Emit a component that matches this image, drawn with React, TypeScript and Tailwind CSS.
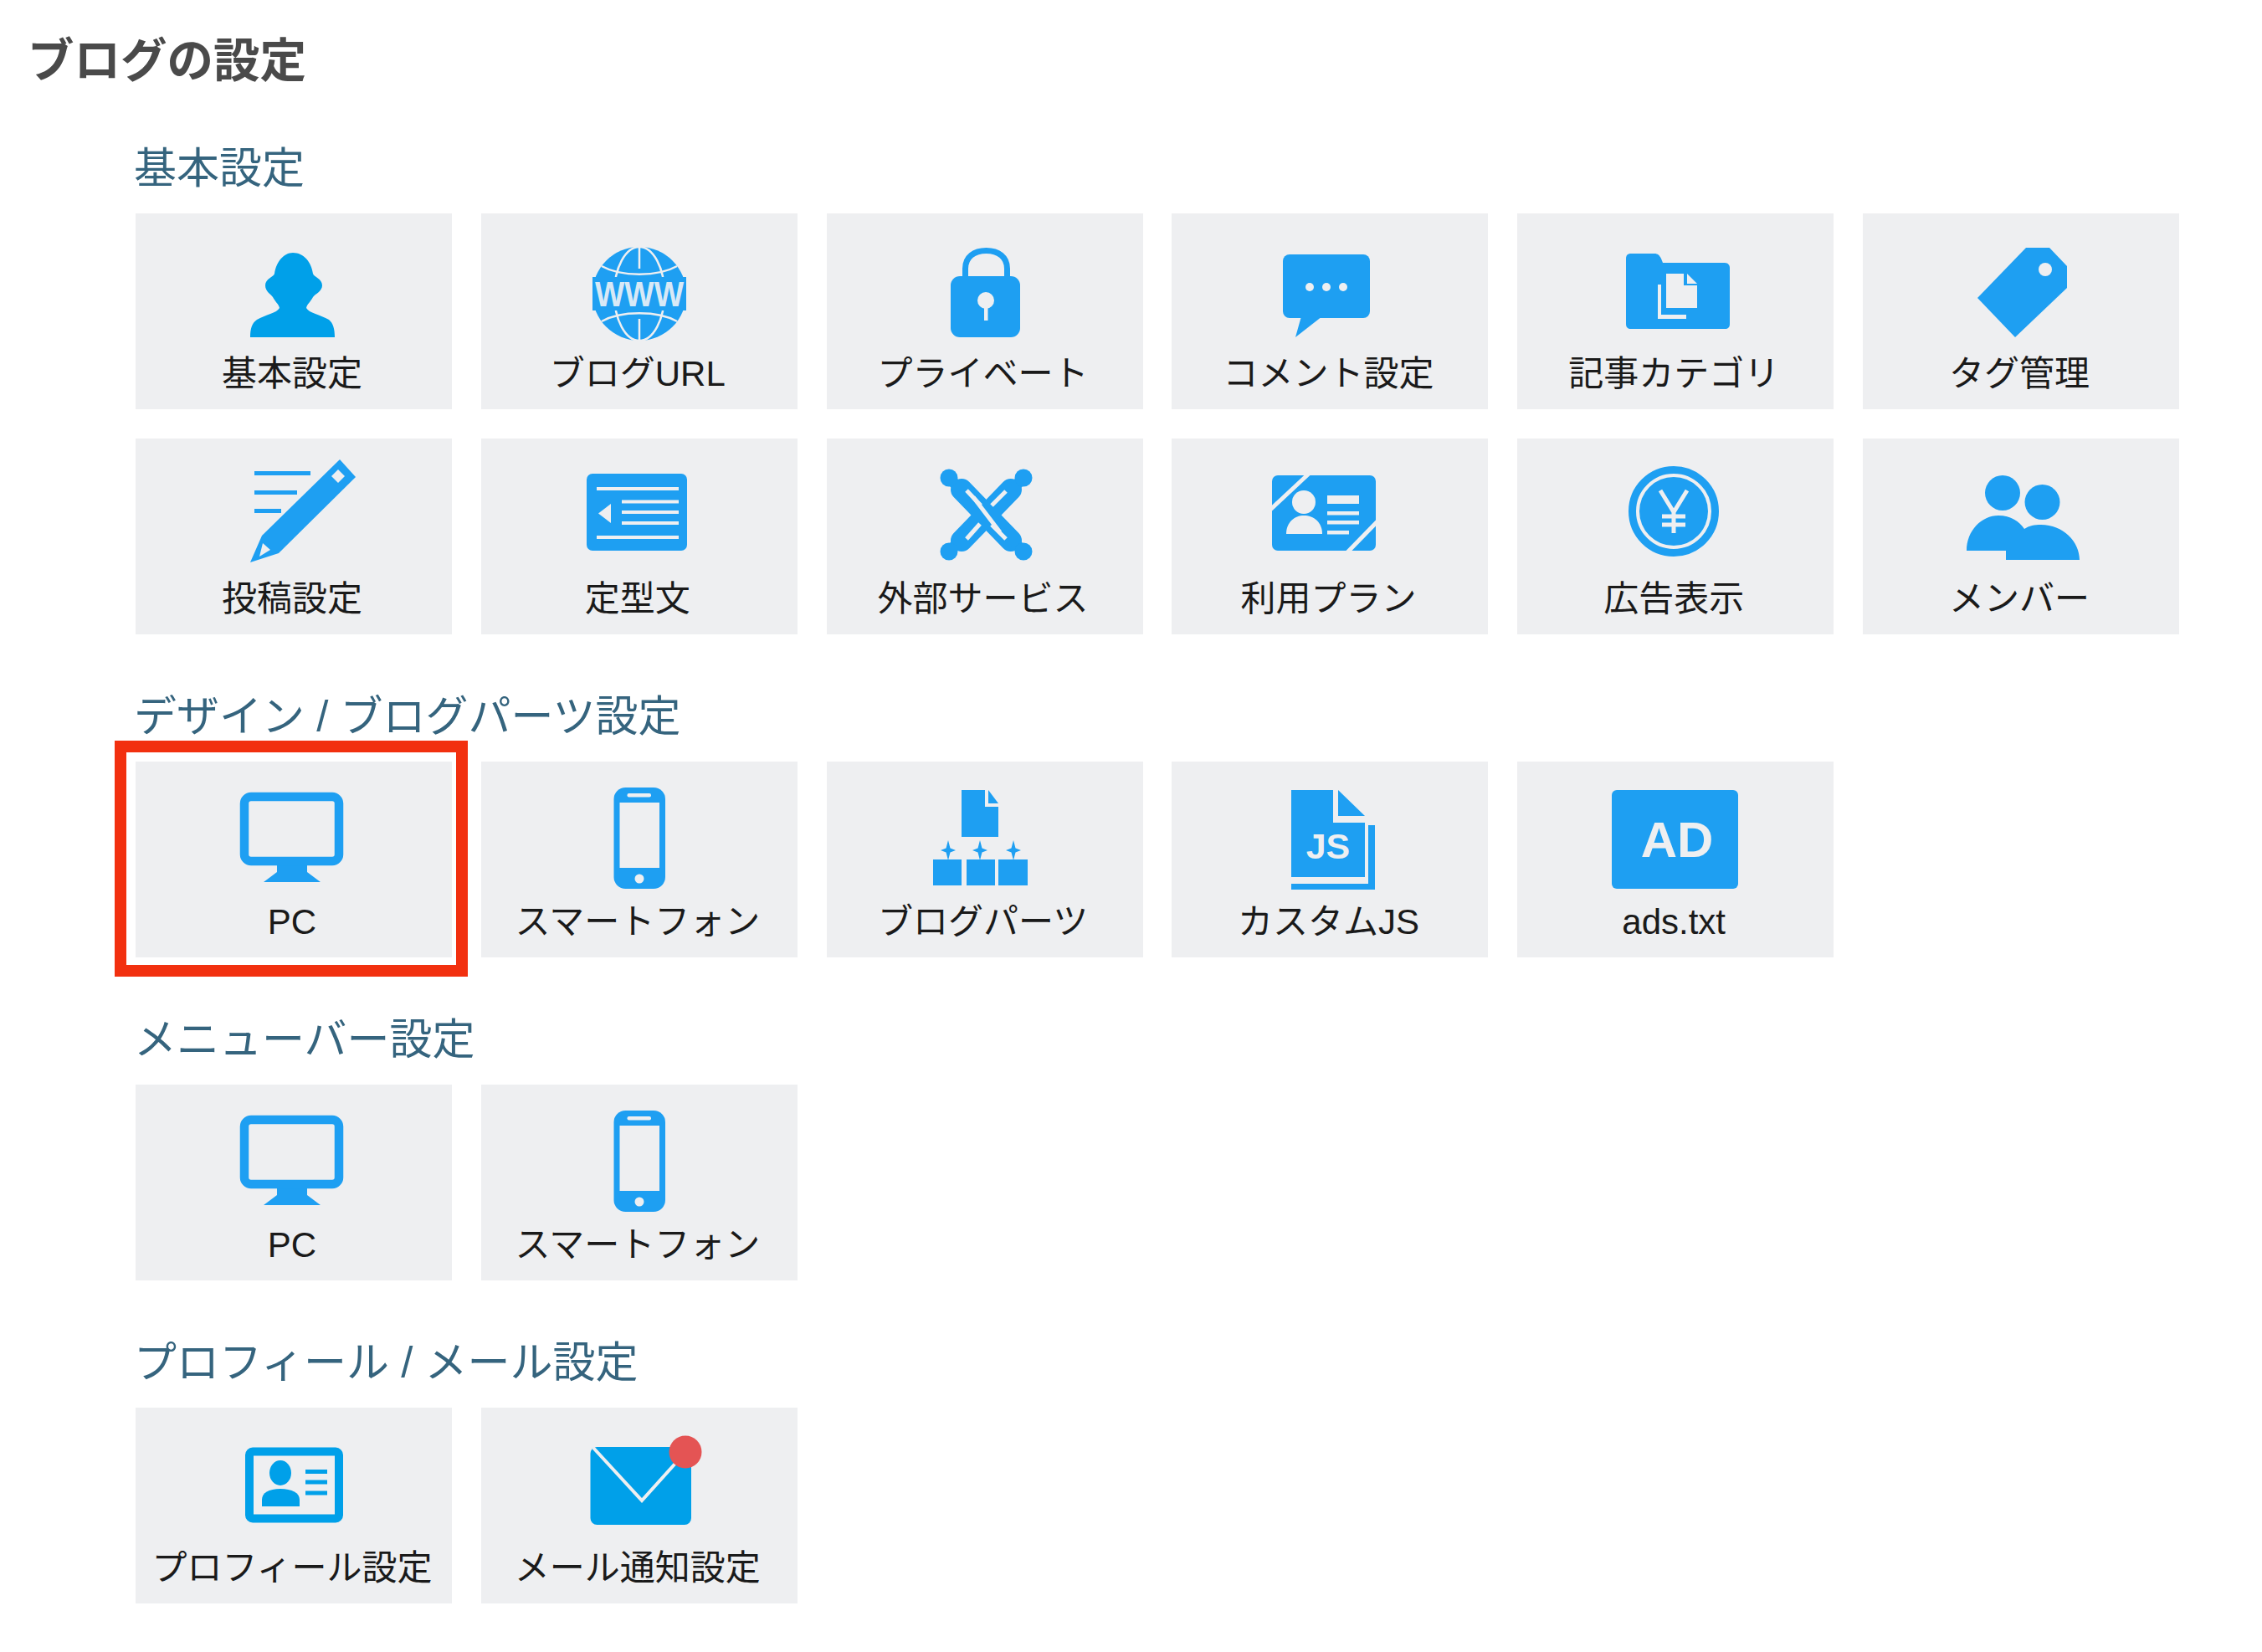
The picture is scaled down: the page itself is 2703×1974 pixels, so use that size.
import type { ReactNode } from "react";

const BLUE = "#1e9ff2";
const CYAN = "#00a0e9";
const CARD = "#eeeff1";

// all icons share one box so the labels line up
function Icon({ children }: { children: ReactNode }) {
  return (
    <svg viewBox="0 -8 160 138" className="h-[138px] w-[160px] shrink-0" fill={BLUE}>
      {children}
    </svg>
  );
}

const PersonIcon = () => (
  <Icon>
    <path
      fill={CYAN}
      d="M79 19C92 19 101 30 103 44C104 48 114 50 114 58C114 65 106 68 103 72C100 78 96 80 95 85C98 91 112 93 122 99C127 103 129 110 129 120L28 120C28 110 30 103 36 99C46 93 60 91 63 85C62 80 58 78 55 72C52 68 46 65 46 58C46 50 56 48 57 44C59 30 68 19 79 19Z"
    />
  </Icon>
);

const GlobeIcon = () => (
  <Icon>
    <circle cx="80" cy="68" r="56" />
    <g fill="none" stroke={CARD} strokeWidth="2.5">
      <ellipse cx="80" cy="68" rx="30" ry="56" />
      <path d="M35 35C58 48 102 48 125 35M35 101C58 88 102 88 125 101M80 12V38M80 98V124" />
    </g>
    <rect x="24" y="48" width="112" height="40" />
    <text
      x="80"
      y="83"
      fill="#d8e9f6"
      fontFamily="Liberation Sans, sans-serif"
      fontWeight="700"
      fontSize="42"
      textAnchor="middle"
      textLength="106"
      lengthAdjust="spacingAndGlyphs"
    >
      WWW
    </text>
  </Icon>
);

const LockIcon = () => (
  <Icon>
    <path
      fill="none"
      stroke={BLUE}
      strokeWidth="7"
      d="M56.5 50V38C56.5 24 67 16.5 81.5 16.5C96 16.5 106.5 24 106.5 38V50"
    />
    <rect x="39" y="47" width="83" height="73" rx="11" />
    <circle cx="81" cy="76" r="10" fill={CARD} />
    <rect x="79" y="78" width="4.5" height="22" fill={CARD} />
  </Icon>
);

const CommentIcon = () => (
  <Icon>
    <rect x="24" y="21" width="104" height="76" rx="8" />
    <path d="M46 95L39 120L71 95Z" />
    <circle cx="56" cy="60" r="5" fill={CARD} />
    <circle cx="76" cy="60" r="5" fill={CARD} />
    <circle cx="96" cy="60" r="5" fill={CARD} />
  </Icon>
);

const FolderIcon = () => (
  <Icon>
    <path d="M27 20H55C59 20 61 22 63 26L65 31H139C143 31 145 34 145 37V104C145 108 143 110 139 110H27C23 110 21 108 21 104V26C21 22 23 20 27 20Z" />
    <path fill={CARD} d="M69 44H90V58H106V85H69Z" />
    <path fill={CARD} d="M94 44L106 56H94Z" />
    <path fill={CARD} d="M59 57H63V93H93V98H59Z" />
  </Icon>
);

const TagIcon = () => (
  <Icon>
    <path d="M86 13H114L135 35V61L73 120L28 73Z" />
    <circle cx="109" cy="39" r="8" fill={CARD} />
  </Icon>
);

const PenIcon = () => (
  <Icon>
    <path d="M135 -3L154 18L62 109L28 120L42 88Z" />
    <path fill={CARD} d="M133 9L141 17L133 25L125 17Z" />
    <path fill={CARD} d="M39 113L43 97L52 105Z" />
    <rect x="33" y="11" width="67" height="5" />
    <rect x="33" y="34" width="51" height="5" />
    <rect x="33" y="56" width="32" height="5" />
  </Icon>
);

const TemplateIcon = () => (
  <Icon>
    <rect x="17" y="14" width="120" height="92" rx="7" />
    <g fill={CARD}>
      <rect x="29" y="30" width="98" height="4" />
      <rect x="59" y="45.5" width="68" height="4" />
      <rect x="59" y="58" width="68" height="4" />
      <rect x="59" y="71" width="68" height="4" />
      <rect x="29" y="88" width="98" height="4" />
      <path d="M46 50V73L31 61.5Z" />
    </g>
  </Icon>
);

const ToolsIcon = () => (
  <Icon>
    <g stroke={BLUE} strokeWidth="26" strokeLinecap="round">
      <path d="M52 33L111 94" />
      <path d="M111 33L52 94" />
    </g>
    <g stroke={BLUE} strokeWidth="13" strokeLinecap="round">
      <path d="M38 20L58 40M125 20L105 40M38 106L58 86M125 106L105 86" />
    </g>
    <circle cx="37" cy="19" r="10.500" />
    <circle cx="126" cy="19" r="10.500" />
    <circle cx="37" cy="107" r="10.500" />
    <circle cx="126" cy="107" r="10.500" />
    <g stroke={CARD} strokeWidth="5" fill="none">
      <path d="M58 34L75 52" />
      <path d="M88 75L105 92" />
      <path d="M105 35L88 52" />
      <path d="M74 74L58 92" />
      <path d="M66 42L98 84" />
    </g>
  </Icon>
);

const PlanIcon = () => (
  <Icon>
    <rect x="11" y="16" width="124" height="90" rx="7" />
    <g stroke={CARD} strokeWidth="5" fill="none">
      <path d="M9 57L55 14" />
      <path d="M101 108L137 71" />
    </g>
    <g fill={CARD}>
      <circle cx="49" cy="48" r="14" />
      <path d="M28 86C28 72 38 64 49 64C61 64 71 72 71 86Z" />
      <rect x="77" y="40" width="38" height="10" />
      <rect x="77" y="59" width="38" height="4.5" />
      <rect x="77" y="70" width="38" height="4.5" />
      <rect x="77" y="82" width="26" height="4.5" />
    </g>
  </Icon>
);

const YenIcon = () => (
  <Icon>
    <circle cx="78" cy="59" r="49.5" fill="none" stroke={BLUE} strokeWidth="9" />
    <circle cx="78" cy="59" r="41" />
    <path
      fill="none"
      stroke={CARD}
      strokeWidth="5"
      d="M62 34L78 60L94 34M78 60V85M64 65H92M64 75H92"
    />
  </Icon>
);

const MembersIcon = () => (
  <Icon>
    <circle cx="58" cy="37" r="21" />
    <circle cx="105.500" cy="48" r="21" />
    <path d="M15 106C15 82 33 64 53 64C68 64 78 71 84 80C90 76 96 75 104 75C130 75 150 95 150 117H62V106Z" />
  </Icon>
);

const MonitorIcon = () => (
  <Icon>
    <path d="M60 94H96V104L112 116H44L60 104Z" />
    <rect x="21" y="14" width="113" height="77" rx="8" fill="none" stroke={BLUE} strokeWidth="10.500" />
  </Icon>
);

const PhoneIcon = () => (
  <Icon>
    <rect x="49.500" y="3" width="61.500" height="121" rx="14" />
    <rect x="56.500" y="21" width="47.500" height="78" fill={CARD} />
    <rect x="65.500" y="10" width="28.500" height="4.500" rx="2" fill={CARD} />
    <circle cx="80" cy="112" r="5.500" fill={CARD} />
  </Icon>
);

const PartsIcon = () => (
  <Icon>
    <path d="M52 6H80V26H96V62H52Z" />
    <path d="M84 6L96 22H84Z" />
    <rect x="18" y="89" width="34" height="31" />
    <rect x="58" y="89" width="34" height="31" />
    <rect x="96" y="89" width="35" height="31" />
    <path d="M36 66L38.500 75.500L45 78L38.500 80.500L36 90L33.500 80.500L27 78L33.500 75.500Z" />
    <path d="M74 66L76.500 75.500L83 78L76.500 80.500L74 90L71.500 80.500L65 78L71.500 75.500Z" />
    <path d="M114 66L116.500 75.500L123 78L116.500 80.500L114 90L111.500 80.500L105 78L111.500 75.500Z" />
  </Icon>
);

const JsIcon = () => (
  <Icon>
    <path d="M34 6H84V45H122V110H34Z" />
    <path d="M90 6L122 37H90Z" />
    <path d="M126 48H134V125H34V118H126Z" />
    <text
      x="78"
      y="88"
      fill={CARD}
      fontFamily="Liberation Sans, sans-serif"
      fontWeight="700"
      fontSize="43"
      textAnchor="middle"
    >
      JS
    </text>
  </Icon>
);

const AdIcon = () => (
  <Icon>
    <rect x="4" y="6" width="151" height="118" rx="6" />
    <text
      x="82"
      y="86"
      fill={CARD}
      fontFamily="Liberation Sans, sans-serif"
      fontWeight="700"
      fontSize="60"
      textAnchor="middle"
    >
      AD
    </text>
  </Icon>
);

const ProfileIcon = () => (
  <Icon>
    <rect x="27" y="24.500" width="107" height="80" rx="4" fill="none" stroke={CYAN} strokeWidth="10" />
    <g fill={CYAN}>
      <ellipse cx="64" cy="50" rx="13" ry="15" />
      <path d="M42 90V82C42 74 50 69 64 69C78 69 87 74 87 82V90Z" />
      <rect x="94" y="46" width="26" height="5" />
      <rect x="94" y="58.500" width="26" height="5" />
      <rect x="94" y="71.500" width="26" height="5" />
    </g>
  </Icon>
);

const MailIcon = () => (
  <Icon>
    <rect x="21.500" y="19" width="120.500" height="93" rx="8" fill={CYAN} />
    <path d="M25 20L83 83L138 22" fill="none" stroke={CARD} strokeWidth="4" />
    <circle cx="135" cy="25" r="19.500" fill="#e45454" />
  </Icon>
);

type Item = { label: string; icon: ReactNode; marked?: boolean };

function Card({ item }: { item: Item }) {
  return (
    <div className="relative flex h-[234px] w-[378px] flex-col items-center bg-[#eeeff1] pt-[20px]">
      {item.icon}
      <span className="mt-[9px] -translate-x-[2px] whitespace-nowrap text-[42px] leading-[50px] text-[#1a1a1a]">
        {item.label}
      </span>
      {item.marked && (
        <div className="absolute -top-[25px] -left-[25px] -right-[19px] -bottom-[23px] border-[14px] border-[#f2300f]" />
      )}
    </div>
  );
}

function Section({ title, items, className }: { title: string; items: Item[]; className: string }) {
  return (
    <section className={className}>
      <h2 className="mb-[25px] -ml-[2px] h-[60px] text-[51px] font-normal leading-[63px] text-[#35647e]">{title}</h2>
      <div className="grid grid-cols-[repeat(6,378px)] gap-x-[34.8px] gap-y-[35px]">
        {items.map((item, i) => (
          <Card key={i} item={item} />
        ))}
      </div>
    </section>
  );
}

const basic: Item[] = [
  { label: "基本設定", icon: <PersonIcon /> },
  { label: "ブログURL", icon: <GlobeIcon /> },
  { label: "プライベート", icon: <LockIcon /> },
  { label: "コメント設定", icon: <CommentIcon /> },
  { label: "記事カテゴリ", icon: <FolderIcon /> },
  { label: "タグ管理", icon: <TagIcon /> },
  { label: "投稿設定", icon: <PenIcon /> },
  { label: "定型文", icon: <TemplateIcon /> },
  { label: "外部サービス", icon: <ToolsIcon /> },
  { label: "利用プラン", icon: <PlanIcon /> },
  { label: "広告表示", icon: <YenIcon /> },
  { label: "メンバー", icon: <MembersIcon /> },
];

const design: Item[] = [
  { label: "PC", icon: <MonitorIcon />, marked: true },
  { label: "スマートフォン", icon: <PhoneIcon /> },
  { label: "ブログパーツ", icon: <PartsIcon /> },
  { label: "カスタムJS", icon: <JsIcon /> },
  { label: "ads.txt", icon: <AdIcon /> },
];

const menubar: Item[] = [
  { label: "PC", icon: <MonitorIcon /> },
  { label: "スマートフォン", icon: <PhoneIcon /> },
];

const profile: Item[] = [
  { label: "プロフィール設定", icon: <ProfileIcon /> },
  { label: "メール通知設定", icon: <MailIcon /> },
];

export default function App() {
  return (
    <div className="h-[1974px] w-[2703px] overflow-hidden bg-white pt-[38px] pl-[33px] font-['Liberation_Sans','Noto_Sans_CJK_JP',sans-serif]">
      <h1 className="h-[70px] text-[55.500px] font-bold leading-[70px] text-[#4a4a4a]">ブログの設定</h1>
      <div className="pl-[129px]">
        <Section title="基本設定" items={basic} className="mt-[62px]" />
        <Section title="デザイン / ブログパーツ設定" items={design} className="mt-[67px]" />
        <Section title="メニューバー設定" items={menubar} className="mt-[67px]" />
        <Section title="プロフィール / メール設定" items={profile} className="mt-[67px]" />
      </div>
    </div>
  );
}
